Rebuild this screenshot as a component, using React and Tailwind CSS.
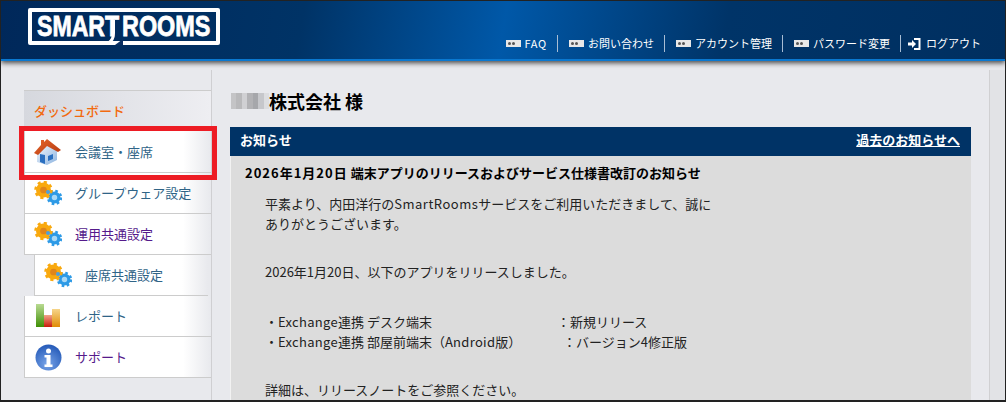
import React from 'react';

const font = { fontFamily: '"Noto Sans CJK JP", "Liberation Sans", sans-serif' };

const topLinks = ['FAQ', 'お問い合わせ', 'アカウント管理', 'パスワード変更'];

// blurred-out company name in the reference
const mosaic = ['#c4c4c6', '#b9b9bb', '#d0d0d3', '#b2b2b5', '#a6a7ab', '#c6c7cb', '#dcdde0'];

const KeyIcon = () => (
  <span className="flex h-[7px] w-[15px] items-center gap-[1px] bg-[#e8e8e8] pl-[2px]">
    <span className="h-[3px] w-[3px] rounded-full bg-[#555]" />
    <span className="h-[3px] w-[3px] rounded-full bg-[#555]" />
  </span>
);

const LogoutIcon = () => (
  <svg width="13" height="14" viewBox="0 0 13 14">
    <path d="M6 1h6.500v12H6v-2h4.500V3H6z" fill="#fff" />
    <path d="M0 5.500h4V3l4 4-4 4V8.500H0z" fill="#fff" />
  </svg>
);

const HouseIcon = () => (
  <svg width="28" height="28" viewBox="0 0 28 28">
    <defs>
      <linearGradient id="wall" x1="0" y1="0" x2="1" y2="1">
        <stop offset="0" stopColor="#f2f7fd" />
        <stop offset="1" stopColor="#8db4e0" />
      </linearGradient>
      <linearGradient id="roof" x1="0" y1="0" x2="1" y2="1">
        <stop offset="0" stopColor="#e8662a" />
        <stop offset="1" stopColor="#b33a12" />
      </linearGradient>
    </defs>
    <path d="M3 14 11 7l12 5v10l-10 5-10-3z" fill="url(#wall)" />
    <path d="M0 15 7 7V2h3v2l3-3 14 11-3 2-11-6-9 9z" fill="url(#roof)" />
    <path d="M6 16l5 1v9l-5-2z" fill="#2a6fc0" />
    <path d="M14 18l5-2v5l-5 2z" fill="#2a6fc0" />
  </svg>
);

const Gear = ({ cx, cy, r, fill, inner }) => {
  const tooth = (2 * Math.PI * r) / 16;
  return (
    <g>
      <circle cx={cx} cy={cy} r={r} fill="none" stroke={fill} strokeWidth="2.500" strokeDasharray={`${tooth} ${tooth}`} />
      <circle cx={cx} cy={cy} r={r - 0.5} fill={fill} />
      <circle cx={cx} cy={cy} r={r * 0.42} fill={inner} />
    </g>
  );
};

const GearsIcon = () => (
  <svg width="28" height="25" viewBox="0 0 28 25">
    <Gear cx={20.500} cy={16.500} r={6.500} fill="#2d9ae6" inner="#a9d8f5" />
    <Gear cx={9.500} cy={9} r={8} fill="#f9a90e" inner="#e0851b" />
    <circle cx="14" cy="11" r="2" fill="#4a9fe0" />
  </svg>
);

const ChartIcon = () => (
  <svg width="26" height="24" viewBox="0 0 26 24">
    <defs>
      <linearGradient id="g1" x1="0" y1="0" x2="0" y2="1"><stop offset="0" stopColor="#b9da92" /><stop offset="1" stopColor="#3f8f05" /></linearGradient>
      <linearGradient id="g2" x1="0" y1="0" x2="0" y2="1"><stop offset="0" stopColor="#f0a58a" /><stop offset="1" stopColor="#c91a0a" /></linearGradient>
      <linearGradient id="g3" x1="0" y1="0" x2="0" y2="1"><stop offset="0" stopColor="#f6d58a" /><stop offset="1" stopColor="#e08c05" /></linearGradient>
    </defs>
    <rect x="1" y="0" width="8" height="23" fill="url(#g1)" />
    <rect x="9" y="11" width="8" height="12" fill="url(#g2)" />
    <rect x="17" y="5" width="8" height="18" fill="url(#g3)" />
  </svg>
);

const InfoIcon = () => (
  <svg width="27" height="27" viewBox="0 0 27 27">
    <defs>
      <radialGradient id="blue" cx="0.45" cy="0.75" r="0.8">
        <stop offset="0" stopColor="#78a4e8" />
        <stop offset="1" stopColor="#1f55b5" />
      </radialGradient>
    </defs>
    <circle cx="13.500" cy="13.500" r="13" fill="url(#blue)" />
    <circle cx="13.500" cy="7" r="2.500" fill="#fff" />
    <path d="M9.500 11h6v9.500h2V23h-8v-2.500h2v-7h-2z" fill="#fff" />
  </svg>
);

const Logo = () => (
  <div
    style={{ fontFamily: '"Liberation Sans", sans-serif' }}
    className="relative mt-[7px] flex h-[37px] w-[192px] items-center gap-[3px] rounded-[2px] border-[4px] border-white pb-[2px] pl-[5px] text-[30px] font-bold leading-none text-white [-webkit-text-stroke:0.8px_white]"
  >
    <span className="w-[82px] origin-left scale-x-[0.77]">SMART</span>
    <span className="w-[88px] origin-left scale-x-[0.78]">ROOMS</span>
    {/* the swoosh that runs off the T into the frame */}
    <svg className="absolute left-[76px] top-[8px]" width="16" height="25" viewBox="0 0 16 25">
      <path d="M5.500 0v13q0 7-5 10" fill="none" stroke="#fff" strokeWidth="3" />
      <path d="M7 25l8-6v6z" fill="#0a2f62" />
    </svg>
  </div>
);

const NavRow = ({ icon, label, color, h = 'h-[41px]' }) => (
  <div className={`flex items-center border-b border-l border-[#cccccc] bg-gradient-to-r from-white from-85% to-[#e8e9ed] ${h}`}>
    <span className="ml-[8px] flex w-[30px] shrink-0 justify-center">{icon}</span>
    <span className={`ml-[12px] text-[13px] ${color}`}>{label}</span>
  </div>
);

export default function App() {
  return (
    <div style={font} className="relative h-[402px] w-[1006px] overflow-hidden border border-b-2 border-[#222] bg-[#e8e9ed]">
      {/* header */}
      <header className="relative flex h-[60px] items-start justify-between border-b-2 border-[#0a78d0] bg-[linear-gradient(100deg,#00285a_0%,#003366_30%,#0058a8_50%,#003468_72%,#002f60_100%)] pl-[27px] pr-[24px] shadow-[0_2px_5px_rgba(0,0,0,0.7)]">
        <Logo />
        <nav className="mt-[34px] flex items-center text-[11px] leading-[17px] text-white">
          {topLinks.map((t) => (
            <div key={t} className="flex items-center gap-[4px] border-r border-[#a8bdd4] pl-[11px] pr-[10px]">
              <KeyIcon />
              <span className={t === 'FAQ' ? 'tracking-[0.7px]' : ''}>{t}</span>
            </div>
          ))}
          <div className="flex items-center gap-[5px] pl-[7px]">
            <LogoutIcon />
            <span>ログアウト</span>
          </div>
        </nav>
      </header>

      <div className="flex">
        {/* sidebar */}
        <aside className="ml-[23px] mt-[9px] h-[345px] w-[188px] border-r border-[#cfcfd2] pt-[20px]">
          <div className="flex h-[41px] items-center border-t border-[#cccccc] bg-gradient-to-r from-[#d6d8de] to-[#eeeef2] pl-[10px] text-[13px] font-medium text-[#f26a0f]">
            ダッシュボード
          </div>
          <NavRow icon={<HouseIcon />} label="会議室・座席" color="text-[#2f6487]" h="h-[42px]" />
          <NavRow icon={<GearsIcon />} label="グループウェア設定" color="text-[#2f6487]" />
          <NavRow icon={<GearsIcon />} label="運用共通設定" color="text-[#551a8b]" />
          <div className="pl-[10px] pr-[3px]">
            <NavRow icon={<GearsIcon />} label="座席共通設定" color="text-[#2f6487]" />
          </div>
          <NavRow icon={<ChartIcon />} label="レポート" color="text-[#2f6487]" />
          <NavRow icon={<InfoIcon />} label="サポート" color="text-[#551a8b]" />
        </aside>

        {/* main */}
        <main className="ml-[18px] w-[741px]">
          <div className="mt-[28px] flex h-[24px] items-center">
            <div className="ml-[1px] flex h-[16px] w-[38px]">
              {mosaic.map((c, i) => (
                <span key={i} className="flex-1" style={{ backgroundColor: c }} />
              ))}
            </div>
            <h1 className="text-[18px] font-bold leading-none text-black">株式会社 様</h1>
          </div>
          <div className="mt-[14px] flex h-[29px] items-center justify-between bg-[#003366] pb-[3px] pl-[10px] pr-[11px] text-[13px] font-bold text-white">
            <span>お知らせ</span>
            <span className="underline">過去のお知らせへ</span>
          </div>
          <div className="h-[300px] border-l border-[#f2f2f2] bg-[#dcdcdc] pl-[14px] pt-[7px] text-[#222]">
            <h2 className="text-[13px] font-bold leading-[20px] text-black">
              <span className="tracking-[1px]">2026年1月20日</span> 端末アプリのリリースおよびサービス仕様書改訂のお知らせ
            </h2>
            <div className="pl-[20px] pt-[11px] text-[13px] leading-[20px]">
              <p>平素より、内田洋行の<span className="tracking-[0.5px]">SmartRooms</span>サービスをご利用いただきまして、誠に</p>
              <p>ありがとうございます。</p>
              <p className="mt-[28px]">2026年1月20日、以下のアプリをリリースしました。</p>
              <div className="mt-[30px] flex">
                <span className="w-[292px]">・<span className="tracking-[0.3px]">Exchange</span>連携 デスク端末</span>
                <span>：新規リリース</span>
              </div>
              <div className="flex">
                <span className="w-[298px]">・<span className="tracking-[0.3px]">Exchange</span>連携 部屋前端末（<span className="tracking-[0.3px]">Android</span>版）</span>
                <span>：バージョン4修正版</span>
              </div>
              <p className="mt-[28px]">詳細は、リリースノートをご参照ください。</p>
            </div>
          </div>
        </main>

        {/* right rail */}
        <div className="ml-[18px] mt-[9px] h-[340px] flex-1 border-l border-[#d0d0d2] bg-[#e2e3e6]" />
      </div>

      {/* highlight box drawn over the menu */}
      <div className="absolute left-[18px] top-[125px] h-[54px] w-[198px] border-[5px] border-[#ed1c24]" />
    </div>
  );
}
